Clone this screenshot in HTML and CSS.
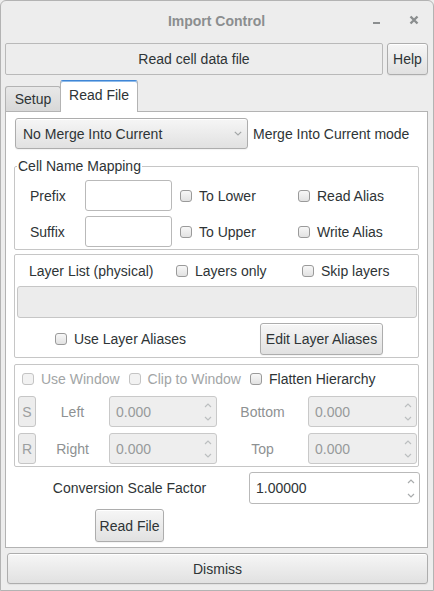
FILE: index.html
```html
<!DOCTYPE html>
<html>
<head>
<meta charset="utf-8">
<title>Import Control</title>
<link rel="stylesheet" href="styles.css">
</head>
<body>
<div class="window">
  <header class="titlebar">
    <span></span>
    <span class="title">Import Control</span>
    <span class="wctl">
      <svg class="wicon" viewBox="0 0 16 16" width="16" height="16"><rect x="5" y="10" width="7" height="2" fill="currentColor"/></svg>
      <svg class="wicon" viewBox="0 0 16 16" width="16" height="16"><path d="M4.5 4.5L11.5 11.5M11.5 4.5L4.5 11.5" stroke="currentColor" stroke-width="2.4" fill="none"/></svg>
    </span>
  </header>

  <div class="toprow">
    <div class="flatbtn">Read cell data file</div>
    <button class="btn help">Help</button>
  </div>

  <div class="tabs">
    <div class="tab">Setup</div>
    <div class="tab active">Read File</div>
  </div>

  <div class="panel">
    <div class="merge-row">
      <div class="btn combo">
        <span>No Merge Into Current</span>
        <svg class="chev" viewBox="0 0 8 5" width="8" height="5"><path d="M0.8 0.8L4 4L7.2 0.8" stroke="#a4a7a8" stroke-width="1.2" fill="none"/></svg>
      </div>
      <span>Merge Into Current mode</span>
    </div>

    <fieldset class="frame mapping">
      <legend>Cell Name Mapping</legend>
      <div class="map-grid">
        <span class="lbl">Prefix</span>
        <span class="entry"></span>
        <label class="check"><span class="box"></span>To Lower</label>
        <label class="check"><span class="box"></span>Read Alias</label>
        <span class="lbl">Suffix</span>
        <span class="entry"></span>
        <label class="check"><span class="box"></span>To Upper</label>
        <label class="check"><span class="box"></span>Write Alias</label>
      </div>
    </fieldset>

    <div class="frame layers">
      <div class="layer-head">
        <span class="lbl-layer">Layer List (physical)</span>
        <label class="check"><span class="box"></span>Layers only</label>
        <label class="check"><span class="box"></span>Skip layers</label>
      </div>
      <div class="layer-entry"></div>
      <div class="layer-foot">
        <label class="check alias"><span class="box"></span>Use Layer Aliases</label>
        <button class="btn edit">Edit Layer Aliases</button>
      </div>
    </div>

    <div class="frame window-box">
      <div class="win-head">
        <label class="check off"><span class="box"></span>Use Window</label>
        <label class="check off"><span class="box"></span>Clip to Window</label>
        <label class="check"><span class="box"></span>Flatten Hierarchy</label>
      </div>
      <div class="win-grid">
        <span class="mini">S</span>
        <span class="wlbl">Left</span>
        <div class="spin off"><span class="val">0.000</span><span class="arrows"><svg viewBox="0 0 8 5" width="8" height="5"><path d="M1 4L4 1L7 4" stroke="currentColor" stroke-width="1.2" fill="none"/></svg><svg viewBox="0 0 8 5" width="8" height="5"><path d="M1 1L4 4L7 1" stroke="currentColor" stroke-width="1.2" fill="none"/></svg></span></div>
        <span class="wlbl">Bottom</span>
        <div class="spin off"><span class="val">0.000</span><span class="arrows"><svg viewBox="0 0 8 5" width="8" height="5"><path d="M1 4L4 1L7 4" stroke="currentColor" stroke-width="1.2" fill="none"/></svg><svg viewBox="0 0 8 5" width="8" height="5"><path d="M1 1L4 4L7 1" stroke="currentColor" stroke-width="1.2" fill="none"/></svg></span></div>
        <span class="mini">R</span>
        <span class="wlbl">Right</span>
        <div class="spin off"><span class="val">0.000</span><span class="arrows"><svg viewBox="0 0 8 5" width="8" height="5"><path d="M1 4L4 1L7 4" stroke="currentColor" stroke-width="1.2" fill="none"/></svg><svg viewBox="0 0 8 5" width="8" height="5"><path d="M1 1L4 4L7 1" stroke="currentColor" stroke-width="1.2" fill="none"/></svg></span></div>
        <span class="wlbl">Top</span>
        <div class="spin off"><span class="val">0.000</span><span class="arrows"><svg viewBox="0 0 8 5" width="8" height="5"><path d="M1 4L4 1L7 4" stroke="currentColor" stroke-width="1.2" fill="none"/></svg><svg viewBox="0 0 8 5" width="8" height="5"><path d="M1 1L4 4L7 1" stroke="currentColor" stroke-width="1.2" fill="none"/></svg></span></div>
      </div>
    </div>

    <div class="scale-grid">
      <span class="scale-lbl">Conversion Scale Factor</span>
      <div class="spin scale"><span class="val">1.00000</span><span class="arrows"><svg viewBox="0 0 8 5" width="8" height="5"><path d="M1 4L4 1L7 4" stroke="currentColor" stroke-width="1.2" fill="none"/></svg><svg viewBox="0 0 8 5" width="8" height="5"><path d="M1 1L4 4L7 1" stroke="currentColor" stroke-width="1.2" fill="none"/></svg></span></div>
      <div class="read-cell"><button class="btn read">Read File</button></div>
    </div>
  </div>

  <button class="btn dismiss">Dismiss</button>
</div>
</body>
</html>
```

FILE: styles.css
```css
* { box-sizing: border-box; }
html, body { margin: 0; padding: 0; }
body {
  background: #ededed;
  font-family: "Liberation Sans", Arial, sans-serif;
  font-size: 14px;
  line-height: 16px;
  color: #2e3436;
}
.window {
  width: 434px;
  height: 591px;
  border: 1px solid #b3b3b3;
  border-radius: 6px 6px 0 0;
  background: #ededed;
  display: flex;
  flex-direction: column;
  padding: 0 5px 6px 4px;
  overflow: hidden;
}
.titlebar {
  height: 42px;
  flex: none;
  display: grid;
  grid-template-columns: 1fr auto 1fr;
  align-items: start;
}
.title {
  padding-top: 12px;
  font-weight: bold;
  color: #8b8e8f;
}
.wctl {
  justify-self: end;
  display: flex;
  gap: 22px;
  padding-top: 11px;
  margin-right: 6px;
  color: #8b8e8f;
}
.wicon { display: block; }

.toprow { display: flex; gap: 4px; height: 32px; flex: none; }
.flatbtn {
  flex: 1;
  border: 1px solid #b9b9b9;
  border-radius: 2px;
  display: flex;
  align-items: center;
  justify-content: center;
}
.btn {
  font: inherit;
  color: inherit;
  border: 1px solid #adadad;
  border-radius: 3px;
  background: linear-gradient(#f6f6f6, #e1e1e1);
  box-shadow: inset 0 1px #fff, 0 1px 1px rgba(0, 0, 0, 0.05);
  padding: 0;
  margin: 0;
  display: flex;
  align-items: center;
  justify-content: center;
}
.help { width: 41px; }

.tabs {
  margin-top: 5px;
  height: 31px;
  display: flex;
  align-items: flex-end;
  flex: none;
}
.tab {
  width: 56px;
  height: 25px;
  border: 1px solid #b3b3b3;
  border-bottom: none;
  border-radius: 3px 3px 0 0;
  background: linear-gradient(#e8e8e8, #d8d8d8);
  display: flex;
  align-items: center;
  justify-content: center;
}
.tab.active {
  width: 78px;
  height: 32px;
  margin-left: -1px;
  margin-bottom: -1px;
  background: #fff;
  border-top: 1px solid #3f86d6;
  box-shadow: inset 0 1px #8fbbea;
  position: relative;
  z-index: 1;
  padding-bottom: 3px;
}

.panel {
  flex: 1;
  background: #fff;
  border: 1px solid #b3b3b3;
  padding: 0 8px;
  display: flex;
  flex-direction: column;
}
.merge-row {
  margin-top: 6px;
  height: 31px;
  display: flex;
  align-items: center;
  gap: 5px;
}
.combo {
  width: 233px;
  height: 31px;
  margin-left: 1px;
  justify-content: space-between;
  padding: 0 5px 0 7px;
}
.chev { display: block; }

.frame {
  border: 1px solid #c6c6c6;
  border-radius: 2px;
  margin: 0;
}
.mapping {
  margin-top: 9px;
  padding: 6px 0 2px 0;
  min-width: 0;
}
.mapping legend {
  margin-left: 2px;
  padding: 0 1px;
  line-height: 16px;
}
.map-grid {
  display: grid;
  grid-template-columns: 70px 95px 118px 1fr;
  grid-auto-rows: 31px;
  row-gap: 5px;
  align-items: center;
}
.lbl { padding-left: 15px; }
.entry {
  width: 87px;
  height: 31px;
  border: 1px solid #b9b9b9;
  border-radius: 3px;
  background: #fff;
}
.check {
  display: flex;
  align-items: center;
  gap: 7px;
  white-space: nowrap;
}
.box {
  width: 12px;
  height: 12px;
  flex: none;
  border: 1px solid #9a9a9a;
  border-radius: 3px;
  background: linear-gradient(#f7f7f7, #e2e2e2);
}
.check.off { color: #a2a5a6; }
.check.off .box { border-color: #c4c4c4; background: #f2f2f2; }

.layers {
  margin-top: 4px;
  padding: 0 1px 2px 2px;
}
.layer-head {
  display: grid;
  grid-template-columns: 159px 126px 1fr;
  height: 31px;
  align-items: center;
}
.lbl-layer { padding-left: 12px; }
.layer-entry {
  height: 32px;
  border: 1px solid #c6c6c6;
  border-radius: 3px;
  background: #ececec;
}
.layer-foot {
  margin-top: 5px;
  display: grid;
  grid-template-columns: 243px 123px;
  align-items: center;
}
.alias { padding-left: 38px; }
.edit { height: 32px; }

.window-box {
  margin-top: 6px;
  padding: 0 1px 2px 3px;
}
.win-head {
  height: 28px;
  display: flex;
  align-items: center;
  gap: 9px;
  padding-left: 4px;
}
.win-grid {
  margin-top: 3px;
  display: grid;
  grid-template-columns: 18px 73px 108px 91px 109px;
  grid-auto-rows: 31px;
  row-gap: 6px;
  align-items: center;
}
.mini {
  height: 31px;
  border: 1px solid #c6c6c6;
  border-radius: 3px;
  background: #ededed;
  color: #9c9fa0;
  display: flex;
  align-items: center;
  justify-content: center;
}
.wlbl { text-align: center; color: #8e9192; }
.spin {
  height: 31px;
  border: 1px solid #b9b9b9;
  border-radius: 3px;
  background: #fff;
  display: flex;
  align-items: center;
  justify-content: space-between;
  padding: 0 4px 0 6px;
}
.spin.off {
  background: #eeeeee;
  border-color: #c9c9c9;
  color: #979a9b;
}
.arrows {
  display: flex;
  flex-direction: column;
  justify-content: space-between;
  height: 100%;
  padding: 6px 0 5px;
  color: #a9acad;
}
.arrows svg { display: block; }
.spin.off .arrows { color: #bcbfc0; }

.scale-grid {
  margin-top: 5px;
  margin-right: -1px;
  display: grid;
  grid-template-columns: 235px 171px;
  grid-template-rows: 32px 33px;
  row-gap: 5px;
  align-items: center;
}
.scale-lbl { text-align: center; padding-right: 4px; }
.spin.scale { height: 32px; }
.read-cell { display: flex; justify-content: center; padding-right: 4px; }
.read { width: 69px; height: 33px; }

.dismiss {
  flex: none;
  margin-top: 5px;
  margin-left: 2px;
  height: 31px;
  width: auto;
}
```
